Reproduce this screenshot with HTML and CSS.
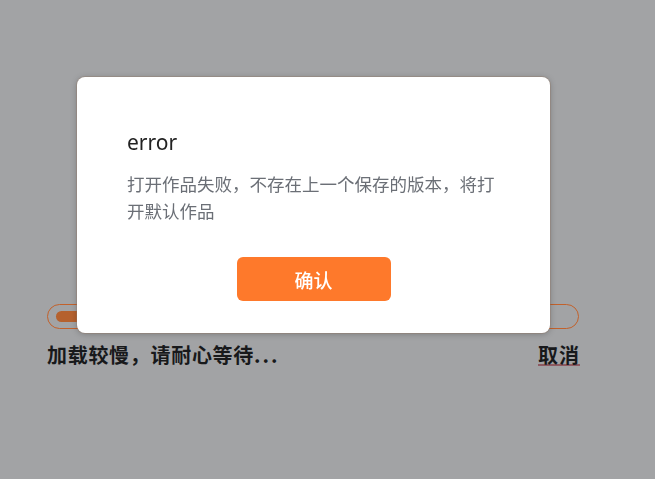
FILE: index.html
```html
<!DOCTYPE html>
<html lang="zh-CN">
<head>
<meta charset="utf-8">
<title>加载</title>
<link rel="stylesheet" href="styles.css">
</head>
<body>
<main class="page">
  <div class="loader">
    <div class="progress"><div class="progress-fill" style="width: 30%"></div></div>
    <div class="loader-row">
      <span class="loader-text">加载较慢，请耐心等待<span class="dots">...</span></span>
      <a class="cancel" href="#">取消</a>
    </div>
  </div>
</main>
<div class="mask">
  <div class="dialog">
    <h2 class="dialog-title">error</h2>
    <p class="dialog-body">打开作品失败，不存在上一个保存的版本，将打开默认作品</p>
    <div class="dialog-actions">
      <button class="btn-confirm" type="button">确认</button>
    </div>
  </div>
</div>
</body>
</html>
```
FILE: styles.css
```css
html, body {
  margin: 0;
  height: 100%;
}
body {
  background: #a2a3a5;
  font-family: "Noto Sans", "Noto Sans CJK SC", sans-serif;
  overflow: hidden;
}
.page {
  padding: 304px 76px 0 47px;
}
.progress {
  border: 1px solid #c2612b;
  border-radius: 13px;
  padding: 6px 8px;
  box-sizing: border-box;
  height: 25px;
  display: flex;
  align-items: center;
}
.progress-fill {
  height: 11px;
  border-radius: 6px;
  background: #b5612e;
}
.loader-row {
  display: flex;
  justify-content: space-between;
  align-items: center;
  margin-top: 13px;
}
.loader-text, .cancel {
  font-family: "Noto Sans CJK SC", sans-serif;
  font-weight: 700;
  font-size: 20px;
  line-height: 26px;
  letter-spacing: 0.7px;
  color: #18191b;
}
.dots {
  letter-spacing: 2px;
}
.cancel {
  letter-spacing: 1px;
  margin-right: -1px;
  text-decoration: underline;
  text-decoration-color: #8e5a62;
  text-decoration-thickness: 1.5px;
  text-underline-offset: 1px;
}
.mask {
  position: fixed;
  inset: 0;
}
.dialog {
  position: absolute;
  left: 77px;
  top: 77px;
  width: 473px;
  box-sizing: border-box;
  padding: 51px 50px 32px 50px;
  background: #fff;
  border-radius: 8px;
  box-shadow: 0 0 0 1px rgba(150, 120, 100, 0.35), 0 1px 6px rgba(0, 0, 0, 0.25);
}
.dialog-title {
  margin: 0;
  font-size: 21px;
  font-weight: 400;
  line-height: 28px;
  color: #222;
}
.dialog-body {
  margin: 14px 0 0;
  font-family: "Noto Sans CJK SC", sans-serif;
  font-size: 17.5px;
  line-height: 27px;
  color: #6b6f76;
}
.dialog-actions {
  display: flex;
  justify-content: center;
  margin-top: 33px;
}
.btn-confirm {
  width: 154px;
  height: 44px;
  border: 0;
  border-radius: 6px;
  background: #fe792b;
  color: #fff;
  font-family: "Noto Sans CJK SC", sans-serif;
  font-size: 19px;
  font-weight: 500;
  cursor: pointer;
}
```
